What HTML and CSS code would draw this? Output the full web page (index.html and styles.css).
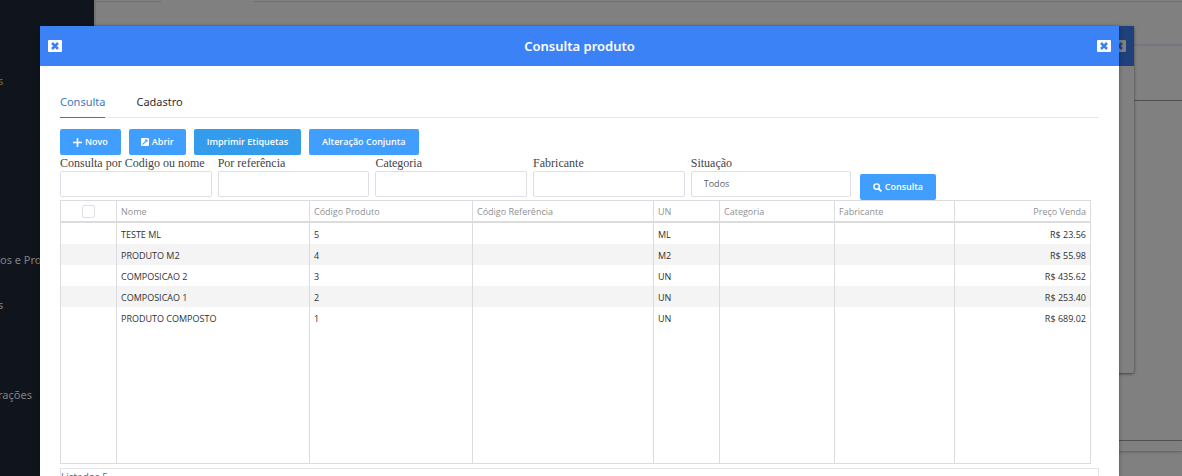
FILE: index.html
```html
<!DOCTYPE html>
<html lang="pt-BR">
<head>
<meta charset="utf-8">
<meta name="viewport" content="width=device-width, initial-scale=1">
<title>Consulta produto</title>
<link rel="stylesheet" href="styles.css">
</head>
<body>
<div class="app">
  <nav class="sidebar">
    <a class="side-link current" href="#">s</a>
    <a class="side-link products" href="#">os e Pro</a>
    <a class="side-link" href="#">s</a>
    <a class="side-link settings" href="#">rações</a>
  </nav>
  <main class="page">
    <div class="page-tabs"><span class="page-tab"></span><span class="page-tab wide"></span></div>
    <div class="page-toolbar"></div>
    <div class="page-filter"></div>
    <div class="page-list"></div>
    <div class="page-end"></div>
  </main>
</div>

<div class="back-dialog">
  <div class="back-head">
    <svg class="close-icon" viewBox="0 0 14 12"><rect width="14" height="12" rx="1" fill="#808080"/><path d="M4 3l6 6M10 3l-6 6" stroke="#1e417b" stroke-width="2.6"/></svg>
  </div>
</div>

<section class="dialog" role="dialog" aria-labelledby="dialog-title">
  <header class="dialog-head">
    <button class="close" type="button" aria-label="Fechar">
      <svg class="close-icon" viewBox="0 0 14 12"><rect width="14" height="12" rx="1" fill="#fff"/><path d="M4 3l6 6M10 3l-6 6" stroke="#3b82f6" stroke-width="2.6"/></svg>
    </button>
    <h1 class="dialog-title" id="dialog-title">Consulta produto</h1>
    <button class="close" type="button" aria-label="Fechar janela">
      <svg class="close-icon" viewBox="0 0 14 12"><rect width="14" height="12" rx="1" fill="#fff"/><path d="M4 3l6 6M10 3l-6 6" stroke="#3b82f6" stroke-width="2.6"/></svg>
    </button>
  </header>
  <div class="dialog-body">
    <div class="tabs" role="tablist">
      <button class="tab active" type="button" role="tab" aria-selected="true">Consulta</button>
      <button class="tab" type="button" role="tab" aria-selected="false">Cadastro</button>
    </div>
    <div class="actions">
      <button class="btn" type="button"><svg class="btn-icon" viewBox="0 0 8 8"><path d="M4 0v8M0 4h8" stroke="#fff" stroke-width="1.4"/></svg>Novo</button>
      <button class="btn open" type="button"><svg class="btn-icon" viewBox="0 0 8 8"><rect width="8" height="8" rx="1" fill="#fff"/><path d="M1.6 6.4l3.6-3.6" stroke="#409eff" stroke-width="1.2"/><path d="M3.4 1.5h3.1v3.1z" fill="#409eff"/></svg>Abrir</button>
      <button class="btn labels" type="button">Imprimir Etiquetas</button>
      <button class="btn" type="button">Alteração Conjunta</button>
    </div>
    <form class="filters">
      <div class="field"><label for="f-name">Consulta por Codigo ou nome</label><input class="box" id="f-name" type="text"></div>
      <div class="field"><label for="f-ref">Por referência</label><input class="box" id="f-ref" type="text"></div>
      <div class="field"><label for="f-cat">Categoria</label><input class="box" id="f-cat" type="text"></div>
      <div class="field"><label for="f-maker">Fabricante</label><input class="box" id="f-maker" type="text"></div>
      <div class="field status"><label for="f-status">Situação</label><select class="box" id="f-status"><option>Todos</option></select></div>
      <button class="btn search" type="button"><svg class="btn-icon" viewBox="0 0 10 10"><circle cx="4" cy="4" r="3" fill="none" stroke="#fff" stroke-width="1.6"/><path d="M6.2 6.2l3.1 3.1" stroke="#fff" stroke-width="2"/></svg>Consulta</button>
    </form>
    <table class="grid">
      <colgroup><col class="c-check"><col><col class="c-code"><col class="c-ref"><col class="c-unit"><col class="c-cat"><col class="c-maker"><col class="c-price"></colgroup>
      <thead>
        <tr><th class="check-cell"><input class="check" type="checkbox" aria-label="Selecionar todos"></th><th>Nome</th><th>Código Produto</th><th>Código Referência</th><th>UN</th><th>Categoria</th><th>Fabricante</th><th class="price">Preço Venda</th></tr>
      </thead>
      <tbody>
        <tr><td></td><td>TESTE ML</td><td>5</td><td></td><td>ML</td><td></td><td></td><td class="price">R$ 23.56</td></tr>
        <tr><td></td><td>PRODUTO M2</td><td>4</td><td></td><td>M2</td><td></td><td></td><td class="price">R$ 55.98</td></tr>
        <tr><td></td><td>COMPOSICAO 2</td><td>3</td><td></td><td>UN</td><td></td><td></td><td class="price">R$ 435.62</td></tr>
        <tr><td></td><td>COMPOSICAO 1</td><td>2</td><td></td><td>UN</td><td></td><td></td><td class="price">R$ 253.40</td></tr>
        <tr><td></td><td>PRODUTO COMPOSTO</td><td>1</td><td></td><td>UN</td><td></td><td></td><td class="price">R$ 689.02</td></tr>
        <tr class="filler"><td></td><td></td><td></td><td></td><td></td><td></td><td></td><td></td></tr>
      </tbody>
    </table>
    <footer class="summary">Listados 5</footer>
  </div>
</section>
</body>
</html>
```
FILE: styles.css
```css
* { box-sizing: border-box; }

body {
  margin: 0;
  height: 100vh;
  overflow: hidden;
  position: relative;
  background: #808080;
  font-family: "Open Sans", "Noto Sans", sans-serif;
}

/* page behind the dialogs */
.app { display: flex; height: 100%; }
.sidebar {
  flex: 0 0 94px;
  display: flex;
  flex-direction: column;
  padding-top: 72px;
  background: #10151d;
}
.side-link {
  font: 11px/18px "Noto Sans", sans-serif;
  color: #808080;
  text-decoration: none;
  text-indent: -2px;
  white-space: nowrap;
}
.side-link.current { color: #80681f; }
.side-link.products { margin: 161px 0 27px; text-indent: 0; }
.side-link.settings { margin-top: 72px; }

.page { flex: 1; display: flex; flex-direction: column; border-left: 2px solid #747474; }
.page-tabs { display: flex; gap: 93px; height: 2px; }
.page-tab { width: 65px; border-bottom: 1px solid #707070; }
.page-tab.wide { flex: 1; }
.page-toolbar { height: 44px; border-bottom: 2px solid #747680; }
.page-filter { height: 55px; border-bottom: 1px solid #4f4f4f; }
.page-list { height: 340px; border-bottom: 1px solid #4f4f4f; }
.page-end { height: 10px; box-shadow: 0 1px 3px #5c5c5c; }

.back-dialog {
  position: absolute;
  top: 26px;
  left: 55px;
  right: 48px;
  height: 347px;
  background: #808080;
  border-radius: 0 0 2px 2px;
  box-shadow: 0 1px 3px rgba(0, 0, 0, .5);
}
.back-head {
  display: flex;
  align-items: center;
  justify-content: flex-end;
  height: 40px;
  padding: 0 8px;
  background: #1e417b;
}

/* product dialog */
.dialog {
  position: absolute;
  top: 26px;
  bottom: 0;
  left: 40px;
  right: 63px;
  overflow: hidden;
  background: #fff;
  box-shadow: 0 1px 4px rgba(0, 0, 0, .4);
}
.dialog-head {
  display: flex;
  align-items: center;
  justify-content: space-between;
  height: 40px;
  padding: 0 8px;
  background: #3b82f6;
}
.dialog-title { margin: 0; font: 600 13px/20px "Noto Sans", sans-serif; color: #fff; }
.close { display: flex; padding: 0; border: 0; background: none; }
.close-icon { display: block; width: 14px; height: 12px; }

.dialog-body { padding: 20px 20px 0; }

.tabs { display: flex; gap: 31px; height: 32px; border-bottom: 1px solid #e4e7ed; }
.tab {
  height: 32px;
  padding: 0;
  border: 0;
  border-bottom: 1px solid transparent;
  background: none;
  font: 11px/16px "Noto Sans", sans-serif;
  color: #303133;
}
.tab.active { border-color: #3b78c4; color: #3b78c4; }

.actions { display: flex; gap: 8px; margin-top: 11px; }
.btn {
  display: flex;
  align-items: center;
  justify-content: center;
  gap: 3px;
  height: 26px;
  padding: 0 13px;
  border: 0;
  border-radius: 2px;
  background: #409eff;
  color: #fff;
  font: 600 9px/14px "Open Sans", sans-serif;
}
.btn.open { padding: 0 12px; }
.btn.labels { background: #339cec; }
.btn-icon { width: 9px; height: 9px; }
.open .btn-icon { width: 8px; height: 8px; }

.filters { display: flex; align-items: flex-end; gap: 6px; }
.field { flex: 0 0 14.6%; min-width: 0; display: flex; flex-direction: column; margin-bottom: 3px; }
.field.status { flex-basis: 160px; }
.field label {
  font: 12px/16px "Liberation Serif", serif;
  color: #444;
  white-space: nowrap;
}
.box {
  width: 100%;
  height: 26px;
  padding: 0 12px;
  border: 1px solid #dcdfe6;
  border-radius: 2px;
  background: #fff;
  font: 9px/14px "Open Sans", sans-serif;
  color: #606266;
  appearance: none;
}
.search { margin-left: 3px; }

.grid {
  width: calc(100% - 8px);
  table-layout: fixed;
  border: 1px solid #dcdcdc;
  border-spacing: 0;
  font-size: 9px;
  line-height: 14px;
  color: #303133;
}
.c-check { width: 56px; }
.c-code { width: 163px; }
.c-ref { width: 181px; }
.c-unit { width: 66px; }
.c-cat { width: 115px; }
.c-maker { width: 120px; }
.c-price { width: 135px; }
.grid th, .grid td {
  height: 21px;
  padding: 2px 4px 0;
  border-right: 1px solid #dcdcdc;
  text-align: left;
  font-weight: 400;
  white-space: nowrap;
}
.grid th { height: 22px; padding-top: 1px; border-bottom: 2px solid #dcdcdc; color: #909090; }
.grid th:last-child, .grid td:last-child { border-right: 0; }
.grid .price { text-align: right; }
.grid .check-cell { padding-top: 0; text-align: center; }
.grid tbody tr:nth-child(even) { background: #f4f4f4; }
.grid tbody .filler, .grid tbody tr.filler:nth-child(even) { background: #fff; }
.grid .filler td { height: 135px; }
.check {
  display: block;
  width: 13px;
  height: 13px;
  margin: 0 auto;
  border: 1px solid #dcdfe6;
  border-radius: 2px;
  background: #fff;
  appearance: none;
}
.summary {
  min-height: 20px;
  margin-top: 4px;
  border: 1px solid #e4e4e8;
  font-size: 10px;
  line-height: 16px;
  color: #606266;
}
```
